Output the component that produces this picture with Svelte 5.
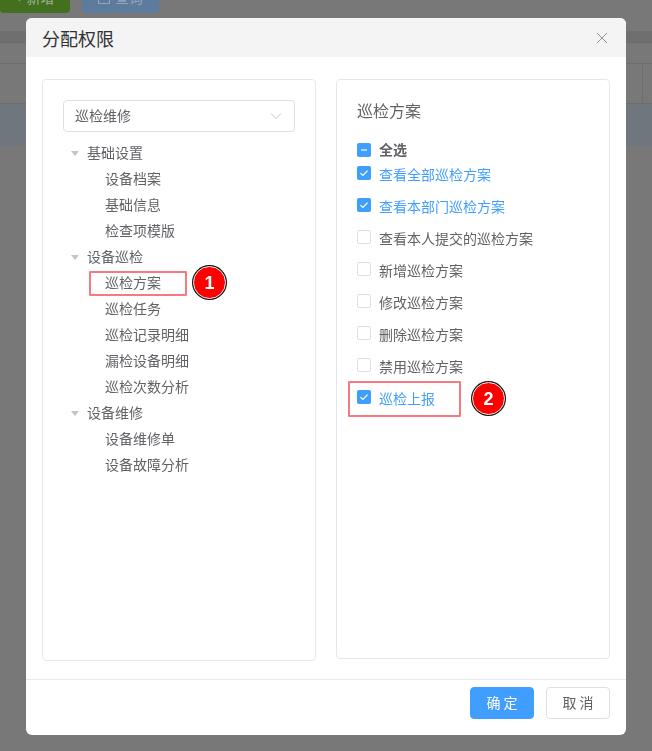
<script>
    const tree = [
        { label: "基础设置", children: ["设备档案", "基础信息", "检查项模版"] },
        { label: "设备巡检", children: ["巡检方案", "巡检任务", "巡检记录明细", "漏检设备明细", "巡检次数分析"] },
        { label: "设备维修", children: ["设备维修单", "设备故障分析"] }
    ];

    const perms = [
        { text: "查看全部巡检方案", checked: true },
        { text: "查看本部门巡检方案", checked: true },
        { text: "查看本人提交的巡检方案", checked: false },
        { text: "新增巡检方案", checked: false },
        { text: "修改巡检方案", checked: false },
        { text: "删除巡检方案", checked: false },
        { text: "禁用巡检方案", checked: false },
        { text: "巡检上报", checked: true, marked: true }
    ];
</script>

<div class="page">
    <div class="toolbar">
        <div class="btn-add">+ 新增</div>
        <div class="btn-query"><i class="query-icon"></i>查询</div>
    </div>
    <div class="table-head"></div>
    <div class="table-row"></div>
    <div class="table-row tall"><div class="cell"></div></div>
    <div class="table-row active"></div>
</div>

<div class="mask">
    <div class="dialog">
        <header>
            <span class="title">分配权限</span>
            <svg class="close" width="12" height="12" viewBox="0 0 12 12">
                <path d="M1 1L11 11M11 1L1 11" stroke="#909399" stroke-width="1" fill="none" />
            </svg>
        </header>

        <div class="body">
            <section class="panel left">
                <div class="select">
                    <span>巡检维修</span>
                    <svg width="12" height="8" viewBox="0 0 12 8">
                        <path d="M1 1.5L6 6.5L11 1.5" stroke="#c0c4cc" stroke-width="1" fill="none" />
                    </svg>
                </div>
                <ul class="tree">
                    {#each tree as group}
                        <li class="node">
                            <i class="caret"></i>{group.label}
                        </li>
                        {#each group.children as child}
                            <li class="node child">
                                {#if child === "巡检方案"}
                                    <span class="mark mark-tree"></span>
                                    <span class="badge badge-tree">1</span>
                                {/if}
                                {child}
                            </li>
                        {/each}
                    {/each}
                </ul>
            </section>

            <section class="panel right">
                <h3>巡检方案</h3>
                <div class="check-all">
                    <span class="box on"><i class="dash"></i></span>
                    <b>全选</b>
                </div>
                {#each perms as p}
                    <div class="perm" class:checked={p.checked}>
                        {#if p.marked}
                            <span class="mark mark-perm"></span>
                            <span class="badge badge-perm">2</span>
                        {/if}
                        <span class="box" class:on={p.checked}>
                            {#if p.checked}
                                <svg width="14" height="14" viewBox="0 0 14 14">
                                    <path d="M3.5 7.2L6 9.4L10.5 4.6" stroke="#fff" stroke-width="1.2" fill="none" />
                                </svg>
                            {/if}
                        </span>
                        <span class="perm-text">{p.text}</span>
                    </div>
                {/each}
            </section>
        </div>

        <footer>
            <div class="btn primary">确 定</div>
            <div class="btn">取 消</div>
        </footer>
    </div>
</div>

<style>
    :global(body) {
        margin: 0;
        overflow: hidden;
        font-family: "Noto Sans CJK SC", "Noto Sans", sans-serif;
    }

    .page {
        height: 751px;
        overflow: hidden;
        background: #787878;
    }

    .toolbar {
        display: flex;
        gap: 12px;
        height: 31px;
    }

    .btn-add,
    .btn-query {
        height: 16px;
        margin-top: -3px;
        display: flex;
        justify-content: center;
        gap: 5px;
        border-radius: 0 0 4px 4px;
        font-size: 14px;
        line-height: 0;
    }

    .btn-add {
        width: 70px;
        background: #42701e;
        color: #a4b496;
    }

    .btn-query {
        width: 77px;
        background: #5d7b9c;
        color: #93a6ba;
    }

    .query-icon {
        width: 10px;
        height: 12px;
        border: 1px solid #93a6ba;
        margin-top: -7px;
    }

    .table-head {
        height: 11px;
        background: #6f6f6f;
        border-bottom: 1px solid #6a6a6a;
    }

    .table-row {
        height: 20px;
        border-bottom: 1px solid #6d6d6d;
    }

    .table-row.tall {
        height: 39px;
    }

    .cell {
        width: 642px;
        height: 100%;
        border-right: 1px solid #6d6d6d;
    }

    .table-row.active {
        height: 42px;
        border: 0;
        background: #6f767d;
    }

    .mask {
        position: fixed;
        inset: 0;
        display: flex;
        justify-content: center;
        align-items: flex-start;
        padding-top: 18px;
    }

    .dialog {
        width: 600px;
        height: 717px;
        display: flex;
        flex-direction: column;
        background: #fff;
        border-radius: 6px;
        overflow: hidden;
    }

    header {
        height: 39px;
        flex: none;
        display: flex;
        align-items: center;
        justify-content: space-between;
        padding: 0 18px 0 16px;
        background: #f4f4f4;
    }

    .title {
        font-size: 18px;
        color: #303133;
    }

    .body {
        flex: 1;
        display: flex;
        gap: 20px;
        padding: 22px 16px 18px;
    }

    .panel {
        width: 274px;
        height: 582px;
        box-sizing: border-box;
        border: 1px solid #e4e7ed;
        border-radius: 4px;
    }

    .left {
        padding: 20px;
    }

    .right {
        height: 580px;
        padding: 20px;
        color: #606266;
    }

    .select {
        height: 32px;
        box-sizing: border-box;
        display: flex;
        align-items: center;
        justify-content: space-between;
        padding: 0 12px 2px 11px;
        border: 1px solid #dcdfe6;
        border-radius: 4px;
        font-size: 14px;
        color: #606266;
    }

    .select svg {
        margin-top: 2px;
    }

    .tree {
        list-style: none;
        margin: 7px 0 0;
        padding: 0;
    }

    .node {
        position: relative;
        height: 26px;
        line-height: 26px;
        padding-left: 24px;
        font-size: 14px;
        color: #606266;
    }

    .node.child {
        padding-left: 42px;
    }

    .caret {
        position: absolute;
        left: 8px;
        top: 12px;
        border-left: 4px solid transparent;
        border-right: 4px solid transparent;
        border-top: 5px solid #c0c4cc;
    }

    h3 {
        margin: 0 0 23px;
        font-size: 16px;
        font-weight: 400;
        line-height: 20px;
    }

    .box {
        width: 14px;
        height: 14px;
        flex: none;
        box-sizing: border-box;
        display: block;
        border: 1px solid #dcdfe6;
        border-radius: 2px;
        background: #fff;
    }

    .box.on {
        border: 0;
        background: #409eff;
    }

    .box svg {
        display: block;
    }

    .dash {
        display: block;
        width: 6px;
        height: 2px;
        margin-left: 4px;
        position: relative;
        top: 6px;
        background: #fff;
        opacity: 0.6;
    }

    .check-all,
    .perm {
        display: flex;
        gap: 8px;
        font-size: 14px;
    }

    .check-all {
        align-items: center;
        height: 14px;
        margin-bottom: 9px;
    }

    .check-all b {
        margin-bottom: 2px;
    }

    .perm {
        position: relative;
        height: 32px;
        line-height: 16px;
    }

    .perm.checked {
        color: #409eff;
    }

    .mark {
        position: absolute;
        box-sizing: border-box;
        border: 2px solid #f87a7e;
        border-radius: 1px;
    }

    .mark-tree {
        left: 26px;
        top: 2px;
        width: 98px;
        height: 25px;
    }

    .mark-perm {
        left: -9px;
        top: -9px;
        width: 113px;
        height: 36px;
    }

    .badge {
        position: absolute;
        width: 33px;
        height: 33px;
        box-sizing: border-box;
        border-radius: 50%;
        background: #f00;
        border: 1px solid #eee;
        box-shadow: 0 0 0 1px #111;
        display: flex;
        align-items: center;
        justify-content: center;
        color: #fff;
        font-family: "Liberation Sans", sans-serif;
        font-size: 18px;
        font-weight: 700;
    }

    .badge-tree {
        left: 130px;
        top: -3px;
    }

    .badge-perm {
        left: 115px;
        top: -8px;
    }

    footer {
        height: 56px;
        flex: none;
        box-sizing: border-box;
        display: flex;
        justify-content: flex-end;
        gap: 12px;
        padding: 7px 16px 0;
        border-top: 1px solid #e9e9ee;
    }

    .btn {
        width: 64px;
        height: 32px;
        box-sizing: border-box;
        border: 1px solid #dcdfe6;
        border-radius: 4px;
        font-size: 14px;
        line-height: 28px;
        text-align: center;
        color: #606266;
    }

    .btn.primary {
        border-color: #409eff;
        background: #409eff;
        color: #fff;
    }
</style>
